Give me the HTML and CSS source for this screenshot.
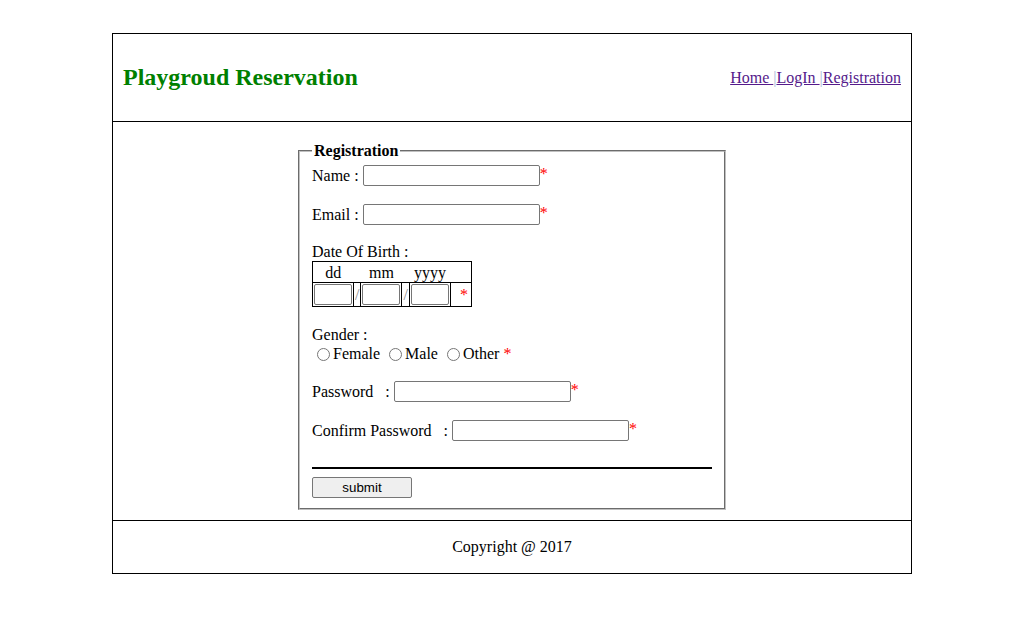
FILE: index.html
```html
<!DOCTYPE html>
<html>
<head>
<meta charset="utf-8">
<title>Playgroud Reservation</title>
<link rel="stylesheet" href="styles.css">
</head>
<body>
<div class="page">
  <header class="header">
    <h2 class="title">Playgroud Reservation</h2>
    <nav class="nav"><a href="#">Home </a><span class="sep">|</span><a href="#">LogIn </a><span class="sep">|</span><a href="#">Registration</a></nav>
  </header>
  <main class="content">
    <fieldset class="reg">
      <legend class="legend">Registration</legend>
      <div class="row">
        <span class="lbl">Name :</span><input type="text" class="field"><span class="req">*</span>
      </div>
      <div class="row row-gap">
        <span class="lbl">Email :</span><input type="text" class="field"><span class="req">*</span>
      </div>
      <div class="label-line dob-label">Date Of Birth :</div>
      <table class="dob">
        <tr class="dob-head">
          <td>dd</td><td></td><td>mm</td><td></td><td>yyyy</td><td></td>
        </tr>
        <tr class="dob-body">
          <td><input type="text" class="dfield"></td>
          <td class="slash">/</td>
          <td><input type="text" class="dfield"></td>
          <td class="slash">/</td>
          <td><input type="text" class="dfield"></td>
          <td class="dreq"><span class="req">*</span></td>
        </tr>
      </table>
      <div class="label-line gender-label">Gender :</div>
      <div class="radios">
        <label><input type="radio" name="g">Female</label>
        <label><input type="radio" name="g">Male</label>
        <label><input type="radio" name="g">Other</label>
        <span class="req">*</span>
      </div>
      <div class="row pw-row">
        <span class="lbl-pw">Password &nbsp; : </span><input type="password" class="field"><span class="req">*</span>
      </div>
      <div class="row row-gap">
        <span class="lbl-pw">Confirm Password &nbsp; : </span><input type="password" class="field"><span class="req">*</span>
      </div>
      <hr class="rule">
      <button type="submit" class="submit">submit</button>
    </fieldset>
  </main>
  <footer class="footer">Copyright @ 2017</footer>
</div>
</body>
</html>
```
FILE: styles.css
```css
body {
  margin: 8px;
  font-family: "Liberation Serif", "Times New Roman", serif;
  font-size: 16px;
  color: #000;
  background: #fff;
}

.page {
  width: 800px;
  box-sizing: border-box;
  margin: 25px auto 0;
  border: 1px solid #000;
}

.header {
  height: 88px;
  box-sizing: border-box;
  border-bottom: 1px solid #000;
  display: flex;
  align-items: center;
  justify-content: space-between;
  padding: 0 10px;
}

.title {
  margin: 0;
  font-size: 24px;
  font-weight: bold;
  color: #008000;
}

.nav a {
  color: #551a8b;
  text-decoration: underline;
}

.sep {
  color: #a9b9d9;
}

.content {
  padding: 20px 0 10px;
}

.reg {
  width: 428px;
  box-sizing: border-box;
  margin: 0 auto;
  padding: 5px 12px 10px;
  border: 2px groove #c0c0c0;
  display: flex;
  flex-direction: column;
  align-items: flex-start;
}

.legend {
  font-weight: bold;
  padding: 0 2px;
}

.row {
  display: flex;
  align-items: center;
  height: 21px;
}

.row-gap {
  margin-top: 18px;
}

.lbl {
  margin-right: 4px;
  white-space: pre;
}

.lbl-pw {
  white-space: pre;
}

.field {
  width: 177px;
  height: 21px;
  box-sizing: border-box;
  border: 1px solid #767676;
  border-radius: 2px;
  padding: 1px 2px;
  margin: 0;
  font-size: 13px;
}

.req {
  color: #f00;
  align-self: flex-start;
  font-size: 16px;
  line-height: 18px;
}

.label-line {
  line-height: 18px;
}

.dob-label {
  margin-top: 18px;
}

.dob {
  margin-top: 0;
  border-collapse: collapse;
  border: 1px solid #000;
}

.dob td {
  padding: 1px;
  text-align: center;
}

.dob-head td {
  height: 19px;
  line-height: 19px;
  padding: 1px 1px 0;
}

.dob-body td {
  border: 1px solid #000;
}

.dfield {
  display: block;
  width: 38px;
  height: 21px;
  box-sizing: border-box;
  border: 1px solid #767676;
  border-radius: 2px;
  margin: 0;
  padding: 1px;
}

.slash {
  color: #8a8a8a;
  padding: 0;
}

.dob-body .dreq {
  width: 17px;
  text-align: right;
  padding: 0 3px 0 0;
}

.dreq .req {
  line-height: 16px;
}

.gender-label {
  margin-top: 19px;
}

.radios {
  display: flex;
  align-items: center;
  height: 20px;
  line-height: 18px;
}

.radios label {
  display: flex;
  align-items: center;
  margin-right: 4px;
}

.radios input {
  width: 13px;
  height: 13px;
  margin: 0 3px 0 5px;
}

.radios .req {
  align-self: center;
  margin-left: 0;
}

.pw-row {
  margin-top: 17px;
}

.rule {
  align-self: stretch;
  margin: 26px 0 0;
  height: 0;
  border: none;
  border-top: 2px solid #000;
}

.submit {
  margin-top: 8px;
  width: 100px;
  height: 21px;
  box-sizing: border-box;
  font-family: "Liberation Sans", Arial, sans-serif;
  font-size: 13.33px;
  background: #efefef;
  border: 1px solid #767676;
  border-radius: 2px;
  padding: 0;
  color: #000;
}

.footer {
  height: 52px;
  border-top: 1px solid #000;
  display: flex;
  align-items: center;
  justify-content: center;
}
```
